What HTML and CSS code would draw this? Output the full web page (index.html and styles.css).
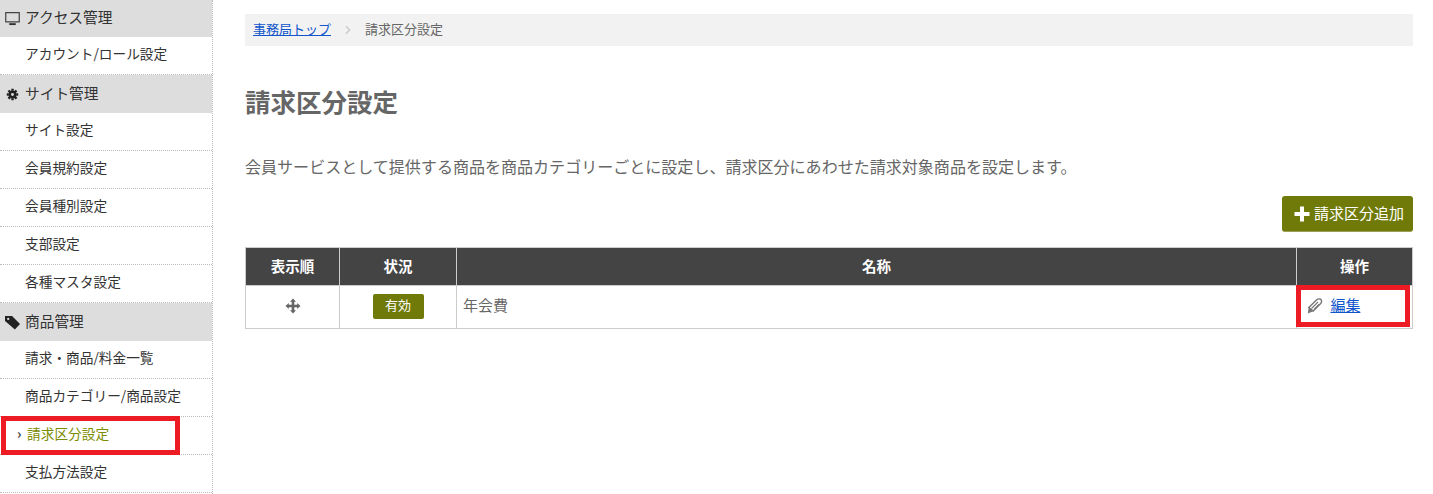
FILE: index.html
```html
<!DOCTYPE html>
<html lang="ja">
<head>
    <meta charset="UTF-8">
    <title>請求区分設定</title>
    <link rel="stylesheet" href="styles.css">
</head>
<body>

<div class="layout">
    <div class="sidebar">
        <div class="nav-head first">
            <svg class="nav-icon" viewBox="0 0 16 16"><path d="M.8 1.800h14.400v9.800H.8z" fill="none" stroke="#444" stroke-width="1.300"/><path d="M4.500 13h7v2h-7z" fill="#333"/></svg>
            アクセス管理
        </div>
        <a class="nav-item">アカウント/ロール設定</a>
        <div class="nav-head">
            <svg class="nav-icon gear" viewBox="0 0 16 16"><path d="M8 3.200a4.800 4.800 0 1 0 0 9.600 4.800 4.800 0 0 0 0-9.600zm0 3a1.800 1.800 0 1 1 0 3.600 1.800 1.800 0 0 1 0-3.600z" fill="#222" fill-rule="evenodd"/><path d="M6.500 1h3v2.500h-3zM6.500 12.500h3V15h-3zM1 6.500h2.500v3H1zM12.500 6.500H15v3h-2.500z" fill="#222"/><path d="M2 4.100L4.100 2l2 2-2.100 2.100zM9.900 11.900l2-2.100 2.100 2.100-2.100 2.100zM2 11.900l2-2.100 2.100 2.100-2 2.100zM9.900 4.100l2-2.100L14 4.100l-2.100 2z" fill="#222"/></svg>
            サイト管理
        </div>
        <a class="nav-item">サイト設定</a>
        <a class="nav-item">会員規約設定</a>
        <a class="nav-item">会員種別設定</a>
        <a class="nav-item">支部設定</a>
        <a class="nav-item">各種マスタ設定</a>
        <div class="nav-head">
            <svg class="nav-icon" viewBox="0 0 16 16"><path d="M0 1h7.500L16 9.500 10.500 15.500 7.800 13 0 6.500z" fill="#222"/><circle cx="3.400" cy="4.200" r="1.200" fill="#ddd"/></svg>
            商品管理
        </div>
        <a class="nav-item">請求・商品/料金一覧</a>
        <a class="nav-item">商品カテゴリー/商品設定</a>
        <a class="nav-item current">請求区分設定</a>
        <a class="nav-item">支払方法設定</a>
    </div>

    <div class="main">
        <div class="breadcrumb">
            <a href="#">事務局トップ</a>
            <svg class="crumb-sep" viewBox="0 0 8 12"><path d="M1.500 1.500L6 6l-4.500 4.500" fill="none" stroke="#ccc" stroke-width="1.800"/></svg>
            <span>請求区分設定</span>
        </div>

        <h1 class="page-title">請求区分設定</h1>
        <p class="page-desc">会員サービスとして提供する商品を商品カテゴリーごとに設定し、請求区分にあわせた請求対象商品を設定します。</p>

        <div class="actions">
            <button class="add-button">
                <svg class="plus-icon" viewBox="0 0 16 16"><path d="M6 .5h4V6h5.500v4H10v5.500H6V10H.5V6H6z" fill="#fff"/></svg>
                請求区分追加
            </button>
        </div>

        <table class="list-table">
            <thead>
            <tr>
                <th class="col-order">表示順</th>
                <th class="col-status">状況</th>
                <th>名称</th>
                <th class="col-op">操作</th>
            </tr>
            </thead>
            <tbody>
            <tr>
                <td class="center">
                    <svg class="move-icon" viewBox="0 0 16 16"><path d="M8 .5L11 3.800H9.300V6.700h2.900V5L15.500 8l-3.300 3V9.300H9.300v2.900H11L8 15.500l-3-3.300h1.700V9.300H3.800V11L.5 8l3.300-3v1.700h2.900V3.800H5z" fill="#666"/></svg>
                </td>
                <td class="center status-cell"><span class="badge">有効</span></td>
                <td>年会費</td>
                <td class="op-cell">
                    <svg class="pencil-icon" viewBox="0 0 16 16"><path d="M1.800 9.500L9.500 2c2-1.900 5.700-1.400 5 1.800-.2.900-.7 1.700-1.300 2.300l-7 7z" fill="none" stroke="#777" stroke-width="1.400"/><path d="M.8 15.500l1-6.500 4.500 4.200z" fill="#777"/><path d="M4.500 10.500l6.500-6.500M7 11.500l5-5" stroke="#777" stroke-width="1.100"/></svg>
                    <a href="#">編集</a>
                </td>
            </tr>
            </tbody>
        </table>
    </div>
</div>

<div class="mark mark-nav"></div>
<div class="mark mark-edit"></div>

</body>
</html>
```

FILE: styles.css
```css
html, body {
    height: 100%;
}

body {
    font-family: "Noto Sans CJK JP", "Noto Sans", sans-serif;
    background-color: white;
    color: #666;
    margin: 0;
    overflow: hidden;
    position: relative;
}

a {
    color: #1155cc;
}

.layout {
    display: flex;
    align-items: stretch;
    min-height: 494px;
}

.sidebar {
    width: 212px;
    flex-shrink: 0;
    border-right: 1px dotted #bbb;
}

.nav-head {
    height: 38px;
    box-sizing: border-box;
    background-color: #ddd;
    color: #333;
    font-size: 14.7px;
    display: flex;
    align-items: center;
    padding: 0 0 4px 5px;
    gap: 5px;
    white-space: nowrap;
}

.nav-head.first {
    height: 37px;
    padding-bottom: 5px;
}

.nav-icon {
    width: 15px;
    height: 15px;
    flex-shrink: 0;
    margin-top: 4px;
}

.nav-icon.gear {
    width: 13px;
    height: 13px;
    margin: 4px 1px 0 1px;
}

.nav-item {
    display: flex;
    align-items: center;
    height: 38px;
    box-sizing: border-box;
    padding: 0 0 6px 25px;
    font-size: 13.7px;
    color: #333;
    border-bottom: 1px dotted #bbb;
    position: relative;
}

.nav-item.current {
    color: #7c8c00;
    padding-left: 27px;
}

.nav-item.current::before {
    content: "›";
    position: absolute;
    left: 17px;
    color: #444;
    font-weight: bold;
}

.main {
    flex-grow: 1;
    padding: 14px 20px 0 32px;
    min-width: 0;
}

.breadcrumb {
    display: flex;
    align-items: center;
    height: 32px;
    box-sizing: border-box;
    padding: 0 0 3px 8px;
    background-color: #f2f2f2;
    font-size: 13px;
}

.crumb-sep {
    width: 8px;
    height: 10px;
    margin: 3px 13px 0 13px;
}

.page-title {
    font-size: 25.5px;
    font-weight: bold;
    color: #666;
    line-height: 36px;
    margin: 37px 0 0 0;
}

.page-desc {
    font-size: 16.04px;
    line-height: 22px;
    margin: 36px 0 0 0;
}

.actions {
    display: flex;
    justify-content: flex-end;
    margin-top: 19px;
}

.add-button {
    display: flex;
    align-items: center;
    gap: 4px;
    height: 36px;
    width: 131px;
    padding: 0 0 3px 12px;
    background-color: #6f7a08;
    color: white;
    border: none;
    border-bottom: 1px solid #9aa05a;
    border-radius: 3px;
    font-family: inherit;
    font-size: 15px;
    white-space: nowrap;
}

.plus-icon {
    width: 16px;
    height: 16px;
    margin-top: 3px;
}

.list-table {
    width: 100%;
    margin-top: 15px;
    border-collapse: collapse;
    table-layout: fixed;
    font-size: 15px;
}

.list-table th,
.list-table td {
    border: 1px solid #ccc;
    padding: 0 6px 6px;
    box-sizing: border-box;
}

.list-table th {
    background-color: #444;
    color: white;
    height: 38px;
    padding-bottom: 2px;
    font-weight: bold;
    font-size: 14.5px;
}

.list-table td {
    height: 43px;
}

.col-order {
    width: 94px;
}

.col-status {
    width: 117px;
}

.col-op {
    width: 116px;
}

.center {
    text-align: center;
}

.list-table td.status-cell {
    padding-bottom: 2px;
}

.move-icon {
    width: 16px;
    height: 16px;
    vertical-align: middle;
}

.badge {
    display: inline-block;
    width: 51px;
    line-height: 22px;
    padding-bottom: 3px;
    background-color: #6f7a08;
    color: white;
    border-radius: 2px;
    font-size: 13px;
}

.op-cell {
    white-space: nowrap;
}

.pencil-icon {
    width: 16px;
    height: 16px;
    vertical-align: middle;
    margin: 0 4px 0 4px;
}

/* red annotation boxes */
.mark {
    position: absolute;
    box-sizing: border-box;
    border: 5px solid #ed1c24;
}

.mark-nav {
    left: 1px;
    top: 416px;
    width: 179px;
    height: 39px;
}

.mark-edit {
    left: 1296px;
    top: 285px;
    width: 114px;
    height: 42px;
}
```
